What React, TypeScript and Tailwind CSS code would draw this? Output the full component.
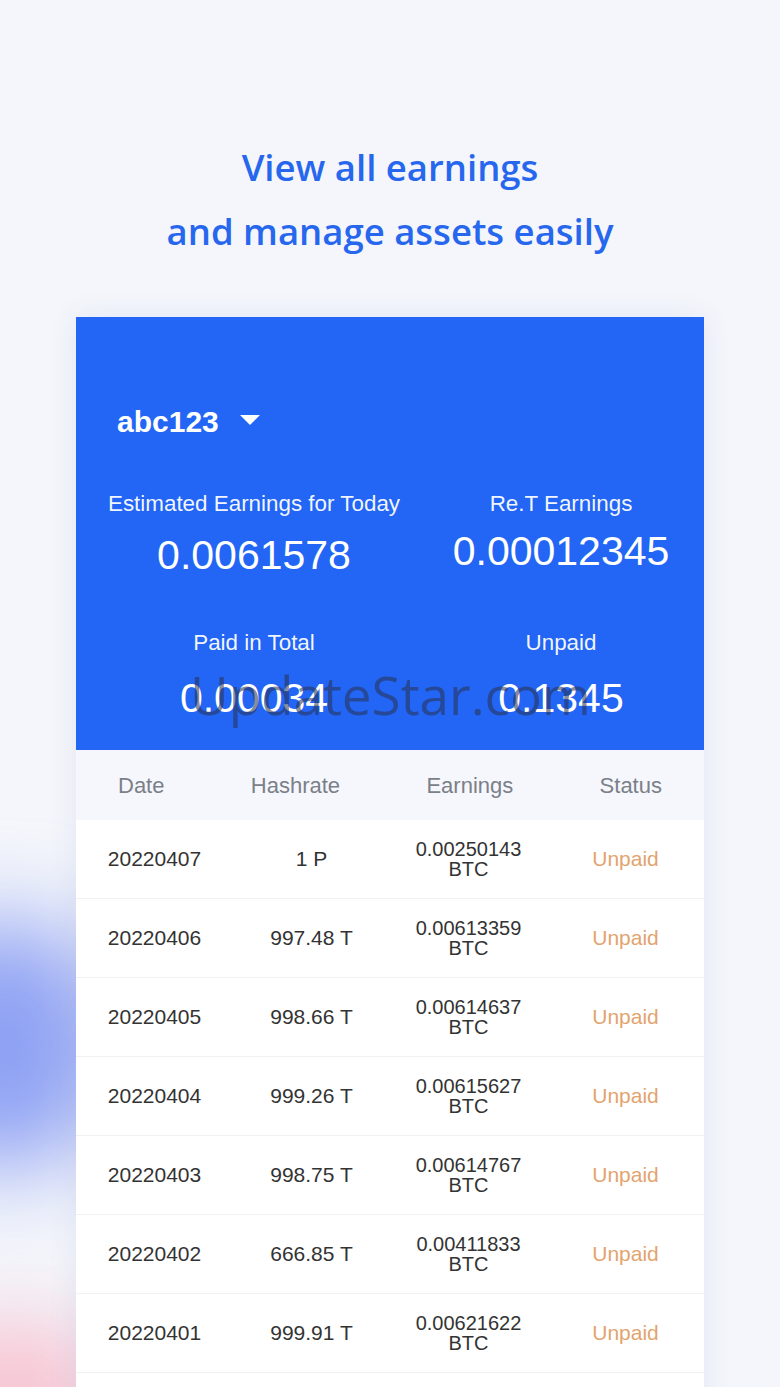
import React from "react";

const rows = [
  { date: "20220407", hashrate: "1 P", earnings: "0.00250143" },
  { date: "20220406", hashrate: "997.48 T", earnings: "0.00613359" },
  { date: "20220405", hashrate: "998.66 T", earnings: "0.00614637" },
  { date: "20220404", hashrate: "999.26 T", earnings: "0.00615627" },
  { date: "20220403", hashrate: "998.75 T", earnings: "0.00614767" },
  { date: "20220402", hashrate: "666.85 T", earnings: "0.00411833" },
  { date: "20220401", hashrate: "999.91 T", earnings: "0.00621622" },
];

function Stat({ label, value, valueOffset }: { label: string; value: string; valueOffset: string }) {
  return (
    <div className="flex flex-col items-center">
      <div className="text-[22.4px] leading-[30px] text-white/95">{label}</div>
      <div className={`${valueOffset} text-[41px] leading-[50px] text-white`}>{value}</div>
    </div>
  );
}

export default function App() {
  return (
    <div className="relative h-[1387px] w-[780px] overflow-hidden bg-[#f4f6fb] font-['Liberation_Sans',Arial,sans-serif]">
      {/* soft background blobs */}
      <div className="absolute left-[-100px] top-[920px] h-[250px] w-[210px] rounded-full bg-[#8ea1f3] blur-[45px]" />
      <div className="absolute left-[-80px] top-[1320px] h-[160px] w-[190px] rounded-full bg-[#f7c5d3] blur-[40px]" />

      <div className="relative flex flex-col items-center pt-[135px]">
        <h1 className="text-center font-['Open_Sans',sans-serif] text-[36.5px] font-semibold leading-[64px] text-[#2767ee]">
          View all earnings
          <br />
          and manage assets easily
        </h1>

        <div className="mt-[54px] w-[628px] bg-white shadow-[0_0_28px_rgba(60,80,160,0.09)]">
          <div className="flex flex-col bg-[#2366f5] pb-[27px]">
            <div className="mt-[86px] flex h-[36px] items-center pl-[41px]">
              <span className="text-[30px] font-bold text-white">abc123</span>
              <svg className="ml-[21px] mt-[-2px]" width="20" height="10" viewBox="0 0 20 10">
                <path d="M0 0 H20 L10 10 Z" fill="white" />
              </svg>
            </div>

            <div className="mt-[50px] flex">
              <div className="w-[356px]">
                <Stat label="Estimated Earnings for Today" value="0.0061578" valueOffset="mt-[11px]" />
              </div>
              <div className="w-[258px]">
                <Stat label="Re.T Earnings" value="0.00012345" valueOffset="mt-[7px]" />
              </div>
            </div>

            <div className="mt-[48px] flex">
              <div className="w-[356px]">
                <Stat label="Paid in Total" value="0.00034" valueOffset="mt-[15px]" />
              </div>
              <div className="w-[258px]">
                <Stat label="Unpaid" value="0.1345" valueOffset="mt-[15px]" />
              </div>
            </div>
          </div>

          <div className="flex h-[70px] items-center justify-between bg-[#f5f7fd] px-[42px] text-[22px] text-[#7b7f88]">
            <span>Date</span>
            <span>Hashrate</span>
            <span>Earnings</span>
            <span>Status</span>
          </div>

          {rows.map((row) => (
            <div
              key={row.date}
              className="grid h-[79px] grid-cols-4 items-center border-b border-[#f0f1f4] text-center text-[21px] text-[#333333]"
            >
              <span>{row.date}</span>
              <span>{row.hashrate}</span>
              <span className="flex flex-col text-[20px] leading-[20px]">
                <span>{row.earnings}</span>
                <span>BTC</span>
              </span>
              <span className="text-[#e2a46f]">Unpaid</span>
            </div>
          ))}
          <div className="h-[60px]" />
        </div>
      </div>

      {/* watermark */}
      <div className="pointer-events-none absolute left-[190px] top-[660px] font-['Open_Sans',sans-serif] text-[53px] leading-[70px] text-[#2a2f4a]/55">
        UpdateStar.com
      </div>
    </div>
  );
}
